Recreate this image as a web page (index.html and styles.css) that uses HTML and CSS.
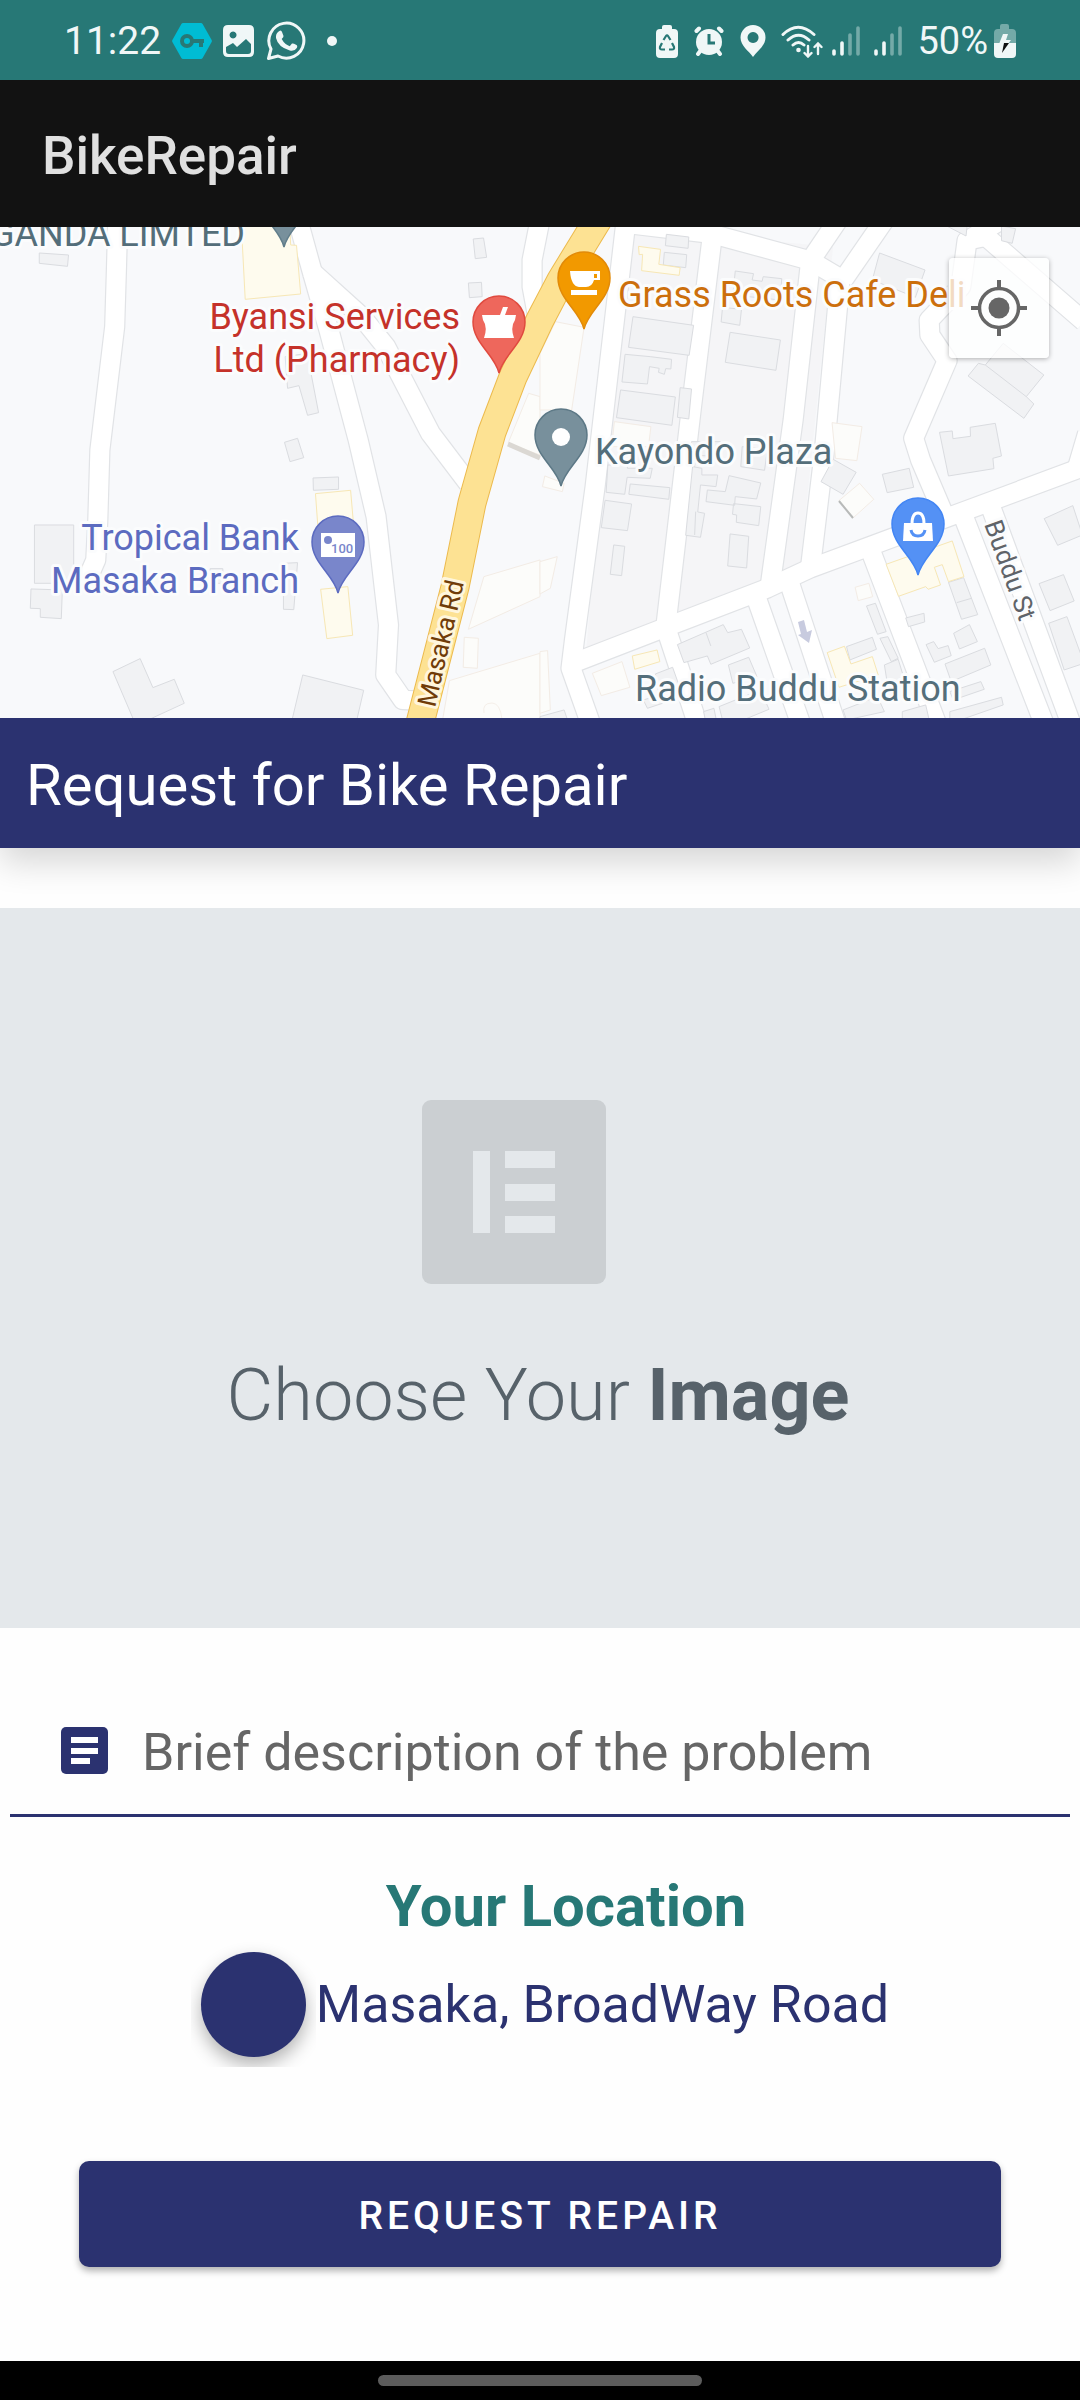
FILE: index.html
```html
<!DOCTYPE html>
<html lang="en">
<head>
<meta charset="utf-8">
<meta name="viewport" content="width=device-width, initial-scale=1">
<title>BikeRepair</title>
<link rel="stylesheet" href="styles.css">
</head>
<body>
<div class="status">
  <div class="status-side">
    <span class="status-text clock">11:22</span>
    <svg class="ic-key" width="40" height="38" viewBox="0 0 40 38"><path fill="#00bcd4" d="M11 1h18q1 0 1.600 1l9 16q.5 1 0 2l-9 16q-.6 1-1.600 1h-18q-1 0-1.600-1l-9-16q-.5-1 0-2l9-16q.6-1 1.600-1z"/><circle cx="15" cy="19" r="5" fill="none" stroke="#277876" stroke-width="4"/><path d="M20 19h12M29 19v6" fill="none" stroke="#277876" stroke-width="4"/></svg>
    <svg class="ic-image" width="31" height="32" viewBox="0 0 31 32"><path fill="#f0f7f7" fill-rule="evenodd" d="M5 0h21q5 0 5 5v22q0 5-5 5H5q-5 0-5-5V5q0-5 5-5zM3 22v4q0 3 3 3h19q3 0 3-3v-7l-5-5-9 8-4-4zM10 6.500a3.500 3.500 0 1 0 .1 0z"/></svg>
    <svg class="ic-chat" width="40" height="40" viewBox="0 0 40 40"><path d="M2.500 37.500 5 28A17.500 17.500 0 1 1 12 35z" fill="none" stroke="#f0f7f7" stroke-width="3" stroke-linejoin="round"/><path fill="#f0f7f7" d="M12 11q3-3 4 0l1.500 4q.3 1-1.800 3 3 5.500 8 7.200l2.300-2.600q1-.6 4 1.200 2 1 .8 3.200-2 3.500-7 2.500Q12 26 10 17q-.4-4 2-6z"/></svg>
    <span class="dot"></span>
  </div>
  <div class="status-side">
    <svg width="22" height="33" viewBox="0 0 22 33"><path fill="#f0f7f7" d="M6 4V2q0-2 2-2h6q2 0 2 2v2h2q4 0 4 4v21q0 4-4 4H4q-4 0-4-4V8q0-4 4-4z"/><path d="M7.500 15 10 11q1-1.500 2 0l2.500 4M16 18l2 4q.6 2.500-2 2.500h-3M9 24.500H6q-2.600 0-2-2.500l2-4" fill="none" stroke="#277876" stroke-width="2.200"/></svg>
    <svg class="ic-alarm" width="30" height="30" viewBox="0 0 30 30"><g stroke="#f0f7f7" stroke-width="4" stroke-linecap="round"><path d="M2.500 5 5 2.500M25 2.500 27.500 5M7 24l-3 4M23 24l3 4"/></g><circle cx="15" cy="16" r="13" fill="#f0f7f7"/><path d="M15 8v9h6" fill="none" stroke="#277876" stroke-width="3"/></svg>
    <svg class="ic-place" width="26" height="32" viewBox="0 0 26 32"><path fill="#f0f7f7" fill-rule="evenodd" d="M13 0a12.500 12.500 0 0 1 12.500 12.500C25.500 21 17 26 13 32 9 26 .5 21 .5 12.500A12.500 12.500 0 0 1 13 0zm0 7a5.500 5.500 0 1 0 .1 0z"/></svg>
    <svg class="ic-wifi" width="42" height="33" viewBox="0 0 42 33"><g fill="none" stroke="#f0f7f7" stroke-width="3" stroke-linecap="round"><path d="M2 9.500q15-14.500 31 0M7 15q10.500-9.500 21 0M12 20q5.500-5 11 0"/><path d="M27 21v10M23.500 28l3.500 3.500 3.500-3.500M37 29V19M33.500 22l3.500-3.500 3.500 3.500" stroke-width="2.400"/></g><circle cx="17.500" cy="25" r="2.300" fill="#f0f7f7"/></svg>
    <svg class="ic-signal" width="28" height="30" viewBox="0 0 28 30"><g stroke-width="3.600" stroke-linecap="round"><path d="M2 25v3M10 17v11" stroke="#f0f7f7"/><path d="M18 9v19M26 2v26" stroke="#74aaa8"/></g></svg>
    <svg class="ic-signal2" width="28" height="30" viewBox="0 0 28 30"><g stroke-width="3.600" stroke-linecap="round"><path d="M2 25v3M10 17v11" stroke="#f0f7f7"/><path d="M18 9v19M26 2v26" stroke="#74aaa8"/></g></svg>
    <span class="status-text percent">50%</span>
    <svg width="22" height="34" viewBox="0 0 22 34"><path fill="#74aaa8" d="M6 5V2q0-2 2-2h5q2 0 2 2v3h3q4 0 4 4v11H0V9q0-4 4-4z"/><path fill="#f0f7f7" d="M0 19h22v11q0 4-4 4H4q-4 0-4-4z"/><path fill="#f0f7f7" d="M9 10h5l-2 6h5l-3 4H5z"/><path fill="#111" d="M10 19h5L8 29z"/></svg>
  </div>
</div>

<header class="appbar"><h1 class="appbar-title">BikeRepair</h1></header>

<div class="map">
  <svg class="map-art" viewBox="0 0 1080 491" preserveAspectRatio="xMidYMid slice" role="img" aria-label="Map of Masaka">
    <defs>
      <path id="pin" d="M0 0C-4-18-26-30-26-51A26 26 0 0 1 26-51C26-30 4-18 0 0z"/>
      <g id="roads" fill="none">
        <g transform="matrix(.3444 0 0 .3333 0 -7)">
          <path d="M342 0 338 150 333 320 290 690 284 900 278 1020 240 1110"/>
          <path d="M865 0 905 150 955 330 1040 660 1092 890 1128 1215 1120 1365 1170 1440 1215 1442"/>
          <path d="M900 150 1050 290 1120 380 1250 640 1360 790"/>
          <path d="M1568 0 1545 120 1545 200 1570 340"/>
        </g>
        <g transform="matrix(.3444 0 0 .3333 540 -7)">
          <path d="M250 0 205 400 160 800 100 1260 90 1345 150 1520"/>
          <path d="M500 50 440 560 365 1222 460 1520"/>
          <path d="M240 10 500 42 785 122 880 180"/>
          <path d="M785 122 865 0M880 180 1000 0"/>
          <path d="M785 130 735 600 668 1100"/>
          <path d="M872 170 825 700 785 1045"/>
          <path d="M95 1330 365 1222 660 1105 785 1045 960 978 1215 880 1580 740"/>
          <path d="M622 1115 760 1520M720 1075 862 1520M955 978 1155 1520M1226 880 1467 1520M1305 850 1545 1520"/>
          <path d="M1340 0 1240 62 1222 200 1130 300 1132 345 1182 422 1085 655 1105 720 1175 890"/>
          <path d="M1240 62 1295 50 1580 305"/>
          <path d="M1590 640 1560 745"/>
        </g>
      </g>
    </defs>
    <rect width="1080" height="491" fill="#f8f9fb"/>
    <path fill="#f1f2f4" opacity=".5" d="M620 0 833 20 800 340 585 440z"/>
    <use href="#roads" class="road-edge"/>
    <use href="#roads" class="road-fill"/>
    <g class="building" transform="matrix(.3444 0 0 .3333 0 -7)">
      <path d="M114 99 199 105 196 139 114 130zM1374 57 1404 54 1413 112 1380 116zM1360 189 1398 187 1400 230 1363 233zM828 410 892 400 925 578 893 586 868 497 835 505zM826 667 864 655 882 713 842 725zM909 774 983 771 983 808 910 811zM100 915H214V1090H100zM90 1107 181 1110 178 1196 117 1192 117 1166 88 1165zM328 1355 407 1316 444 1403 506 1378 535 1450 430 1500H388zM879 1365 1056 1411 1036 1500H848zM823 1030 864 1028 853 1169 823 1168zM610 1046H647V1090H610z"/>
      <path class="shop" d="M700 0H840L844 75 861 76 873 222 712 238zM916 821 1018 811 1028 930 924 935zM931 1108 1010 1100 1024 1246 949 1256z"/>
      <path class="plain" d="M1535 520 1568 530V705L1475 670zM1405 1070 1568 1020V1130L1360 1228zM1348 1252 1389 1255 1386 1345 1345 1342zM1305 1382 1568 1300V1500H1285z"/>
    </g>
    <g class="building" transform="matrix(.3444 0 0 .3333 540 -7)">
      <path d="M367 43 432 51 430 85 364 77zM361 97 426 104 423 143 358 135zM567 153 620 161 616 180 645 184 648 170 702 176 697 240 560 225zM530 262 585 268 580 316 526 306zM270 290 446 316 433 406 257 382zM552 337 698 360 685 451 538 427zM247 403 320 410 382 418 380 447 365 446 361 463 344 457 346 445 318 440 312 492 238 486zM234 510 393 531 383 616 222 593zM407 503 440 507 432 597 399 592zM986 99 1118 150 1090 232 965 180zM1345 370 1463 465 1412 530 1434 552 1405 595 1243 468 1273 430 1293 435zM1160 637 1197 633 1199 656 1250 649 1249 622 1322 610 1340 708 1315 715 1318 746 1186 768zM994 763 1072 745 1085 802 1008 818zM851 718 918 757 880 823 816 785zM197 735 253 735 254 745 326 745 320 775 253 772 246 823 192 817zM262 792 377 803 374 838 258 823zM189 841 266 852 254 932 178 923zM214 975 246 979 237 1067 204 1063zM443 740 470 745 470 765 516 765 511 800 466 795 458 876 478 880 466 952 423 946zM486 810 538 815 549 767 641 789 629 837 567 830 565 856 482 845zM562 851 641 860 635 917 570 907 571 885 559 883zM552 942 606 949 600 1044 545 1038zM587 680 660 690 652 751 583 740zM440 665 524 665 520 710 440 705zM1062 1194 1115 1180 1117 1206 1070 1220zM948 1158 974 1150 1005 1235 980 1243zM987 1255 1010 1250 1040 1315 1020 1325zM1201 1240 1247 1214 1270 1265 1218 1287zM1121 1274 1143 1265 1156 1286 1185 1277 1194 1307 1145 1327zM1176 1332 1291 1285 1309 1335 1194 1385zM1186 1087 1230 1073 1271 1184 1224 1198zM1464 896 1547 857 1575 945 1503 976zM1449 1091 1520 1064 1551 1143 1481 1172zM1477 1210 1530 1190 1580 1330 1522 1350zM1340 18 1381 26 1371 70 1340 62zM1185 20 1240 20 1237 48zM399 1274 532 1214 545 1238 585 1228 609 1284 496 1333 486 1308 418 1328zM547 1335 606 1312 630 1370 560 1390zM335 1362 385 1342 405 1400 345 1420zM1000 1335 1040 1318 1060 1385 1010 1400zM1190 1415 1280 1385 1290 1408 1200 1440zM1190 1475 1340 1432 1345 1455 1220 1500H1190zM1052 1475 1120 1455 1130 1500H1052zM520 1460 640 1410 665 1468 590 1500H530zM0 1490 70 1470 80 1500H0zM890 1280 965 1252 977 1288 900 1320zM880 1470 980 1430 1000 1475 890 1500zM300 1440 350 1425 356 1450 312 1465zM475 1475 505 1465 512 1500H480z"/>
      <path d="M482 1238 496 1278M1210 1148 1253 1135M1293 435 1412 530M452 875 449 945" fill="none"/>
      <path class="shop" d="M286 79 350 88 345 133 407 143 404 166 295 152 298 103 288 104zM268 1308 340 1290 348 1325 275 1348zM1005 1033 1197 963 1231 1070 1186 1085 1168 1034 1145 1042 1163 1095 1127 1108 1120 1100 1041 1129zM834 1298 884 1279 903 1332 965 1310 982 1365 868 1402z"/>
      <path class="plain" d="M45 305 128 322 92 570 0 570V400zM216 605 322 620 315 680H208zM848 608 935 620 920 722 858 715zM868 842 928 790 969 838 910 893zM915 1102 955 1090 966 1130 924 1142zM152 1360 238 1325 261 1402 178 1427zM0 1025 50 1010 30 1105 0 1122zM0 1295 22 1292 30 1470 0 1480zM14 768 70 790 65 815 7 800z"/>
    </g>
    <path d="M839 274 853 291" stroke="#b8bab9" stroke-width="2"/>
    <path d="M508 217 540 231" stroke="#dbd8d3" stroke-width="5"/>
    <path d="M484 486q-2-10 8-10 8 0 10 16" fill="none" stroke="#f5efe9"/>
    <path class="main-edge" d="M419 500 437 430 455 360 472 276 492 205 513 150 540 93 561 53 602-14"/>
    <path class="main-fill" d="M419 500 437 430 455 360 472 276 492 205 513 150 540 93 561 53 602-14"/>
    <path fill="#c8cbdf" d="M798 395 804 393 807 405 812 403 809 416 798 408 801 407z"/>

    <g class="map-label" font-size="36">
      <g fill="#546e7a"><text x="245" y="19" text-anchor="end">GANDA LIMTED</text><text x="595" y="237">Kayondo Plaza</text><text x="635" y="474">Radio Buddu Station</text></g>
      <g fill="#c5322a" text-anchor="end"><text x="460" y="102">Byansi Services</text><text x="460" y="145">Ltd (Pharmacy)</text></g>
      <g fill="#5c6bc0" text-anchor="end"><text x="299" y="323">Tropical Bank</text><text x="299" y="366">Masaka Branch</text></g>
      <text x="618" y="80" fill="#cc6f0c">Grass Roots Cafe Deli</text>
    </g>
    <text class="map-label" font-size="26" fill="#703c08" style="stroke:#fff6dc" transform="translate(435 481) rotate(-77)">Masaka Rd</text>
    <text class="map-label" font-size="26" fill="#5f6368" transform="translate(984 297) rotate(70)">Buddu St</text>

    <g stroke-width="1.500">
      <use href="#pin" x="284" y="20" fill="#78909c" stroke="#607d8b"/>
      <g transform="translate(561 259)"><use href="#pin" fill="#78909c" stroke="#5c7886"/><circle cy="-49" r="9" fill="#fff"/></g>
      <g transform="translate(499 146)"><use href="#pin" fill="#ee675c" stroke="#e04a3f"/><path fill="#fff" d="M-17-58H1L4-66H9L6-58H17L16-53Q11-46 15-35H-15Q-11-46-16-53z"/></g>
      <g transform="translate(584 102)"><use href="#pin" fill="#f29900" stroke="#e28a08"/><path fill="#fff" fill-rule="evenodd" d="M-14-58H16V-49H10Q8-42 2-42H-5Q-13-43-14-58zM10-55V-51H13V-55zM-13-39H13V-34H-13z"/></g>
      <g transform="translate(338 366)"><use href="#pin" fill="#7986cb" stroke="#5c6bc0"/><path fill="#fff" d="M-17-60H17V-36H-17z"/><circle cx="-10" cy="-53" r="4" fill="#7986cb"/><text x="-7" y="-40" font-size="13" font-weight="500" fill="#7986cb" stroke="none">100</text></g>
      <g transform="translate(918 348)"><use href="#pin" fill="#5491f5" stroke="#4285f4"/><path fill="#fff" d="M-14-52H14L15-34H-15z"/><path d="M-6-51Q-6-62 0-62T6-51" fill="none" stroke="#fff" stroke-width="3"/><path d="M-7-45Q-6-39 0-39T7-45" fill="none" stroke="#5491f5" stroke-width="3"/></g>
    </g>
  </svg>
  <button class="locate" type="button" aria-label="Show my location">
    <svg width="56" height="56" viewBox="0 0 56 56"><circle cx="28" cy="28" r="10.500" fill="#666"/><circle cx="28" cy="28" r="19.500" fill="none" stroke="#666" stroke-width="3.500"/><path d="M28 0v9M28 47v9M0 28h9M47 28h9" stroke="#666" stroke-width="4"/></svg>
  </button>
</div>

<h2 class="banner">Request for Bike Repair</h2>

<main class="form">
  <button class="photo" type="button">
    <svg class="photo-icon" width="184" height="184" viewBox="0 0 184 184"><rect width="184" height="184" rx="9" fill="#cbcfd2"/><path fill="#e4e8eb" d="M51 51H68V133H51zM83 51H133V68H83zM83 84H133V101H83zM83 116H133V133H83z"/></svg>
    <span class="photo-text">Choose Your <b>Image</b></span>
  </button>

  <label class="field">
    <svg width="47" height="47" viewBox="0 0 47 47"><rect width="47" height="47" rx="5" fill="#2b3270"/><path fill="#fff" d="M10 10H37V16H10zM10 21H37V27H10zM10 31H29V37H10z"/></svg>
    <input class="field-input" type="text" placeholder="Brief description of the problem" aria-label="Brief description of the problem">
  </label>

  <h3 class="place-title">Your Location</h3>
  <div class="place">
    <span class="fab-wrap"><button class="fab" type="button" aria-label="Update location"></button></span>
    <span>Masaka, BroadWay Road</span>
  </div>

  <button class="submit" type="submit">REQUEST REPAIR</button>
</main>

<div class="navbar"><span class="pill"></span></div>
</body>
</html>
```
FILE: styles.css
```css
* { box-sizing: border-box; }

body {
  margin: 0;
  min-height: 100vh;
  display: flex;
  flex-direction: column;
  background: #fefefe;
  font-family: Roboto, sans-serif;
}

button {
  border: 0;
  padding: 0;
  font-family: inherit;
}

h1, h2, h3 { margin: 0; }

.status {
  height: 80px;
  padding: 2px 64px 0;
  display: flex;
  align-items: center;
  justify-content: space-between;
  background: #277876;
  color: #f0f7f7;
}

.status-side {
  display: flex;
  align-items: center;
}

.status-text {
  font-size: 38px;
  line-height: 44px;
}

.clock { font-size: 39px; }

.ic-key { margin-left: 11px; }
.ic-image { margin-left: 11px; }
.ic-chat { margin-left: 12px; }

.dot {
  width: 10px;
  height: 10px;
  margin-left: 21px;
  border-radius: 50%;
  background: #f0f7f7;
}

.ic-alarm { margin-left: 16px; }
.ic-place { margin-left: 16px; }
.ic-wifi { margin-left: 15px; }
.ic-signal { margin-left: 9px; }
.ic-signal2 { margin-left: 14px; }
.percent { margin: 0 6px 0 15px; }

.appbar {
  height: 147px;
  padding: 4px 42px 0;
  display: flex;
  align-items: center;
  background: #121212;
  color: #e0e0e0;
}

.appbar-title {
  font-size: 53px;
  line-height: 62px;
  font-weight: 500;
}

.map {
  position: relative;
  height: 491px;
  overflow: hidden;
}

.map-art {
  display: block;
  width: 100%;
  height: 100%;
}

.building path { vector-effect: non-scaling-stroke; }

.road-edge { stroke: #e1e3e6; stroke-width: 62px; stroke-linejoin: round; }
.road-fill { stroke: #fff; stroke-width: 55px; stroke-linejoin: round; }

.building path { fill: #f1f2f4; stroke: #dadce0; stroke-width: 1px; }
.building .shop { fill: #fefbee; stroke: #f7e7b5; }
.building .plain { fill: #fcfcfa; stroke: #f3ece5; }

.main-edge, .main-fill { fill: none; stroke-linejoin: round; }
.main-edge { stroke: #ecba4d; stroke-width: 29px; }
.main-fill { stroke: #fde293; stroke-width: 27px; }

.map-label {
  stroke: #fbfcfd;
  stroke-width: 6px;
  stroke-linejoin: round;
  paint-order: stroke;
}

.locate {
  position: absolute;
  top: 31px;
  right: 31px;
  width: 100px;
  height: 100px;
  display: grid;
  place-items: center;
  border-radius: 4px;
  background: rgba(255, 255, 255, .75);
  box-shadow: 0 1px 5px rgba(0, 0, 0, .3);
}

.banner {
  height: 130px;
  padding: 4px 26px 0;
  display: flex;
  align-items: center;
  background: #2b3270;
  color: #fff;
  font-size: 58px;
  line-height: 68px;
  font-weight: 400;
  box-shadow: 0 14px 32px rgba(0, 0, 0, .16);
}

.form {
  padding-top: 60px;
  display: flex;
  flex-direction: column;
}

.photo {
  aspect-ratio: 3 / 2;
  padding: 192px 4px 0 0;
  display: flex;
  flex-direction: column;
  align-items: center;
  gap: 70px;
  background: #e4e8eb;
  color: #57626a;
}

.photo-icon { margin-right: 48px; }

.photo-text {
  font-size: 72px;
  line-height: 84px;
  font-weight: 300;
}

.photo-text b { font-weight: 700; }

.field {
  margin: 62px 10px 0;
  padding: 32px 51px;
  display: flex;
  align-items: center;
  gap: 34px;
  border-bottom: 3px solid #2b3270;
}

.field svg { margin-bottom: 4px; }

.field-input {
  flex: 1;
  min-width: 0;
  height: 60px;
  padding: 0;
  border: 0;
  outline: 0;
  background: none;
  font-family: inherit;
  font-size: 52px;
  color: #222;
}

.field-input::placeholder { color: #666; opacity: 1; }

.place-title {
  margin-top: 55px;
  padding-left: 52px;
  text-align: center;
  font-size: 58px;
  line-height: 68px;
  font-weight: 700;
  color: #277876;
}

.place {
  margin-top: 2px;
  display: flex;
  align-items: center;
  justify-content: center;
  color: #2b3270;
  font-size: 52px;
  line-height: 62px;
}

.fab-wrap {
  padding: 10px;
  overflow: hidden;
}

.fab {
  display: block;
  width: 105px;
  height: 105px;
  border-radius: 50%;
  background: #2b3270;
  box-shadow: 0 8px 18px rgba(0, 0, 0, .3);
}

.submit {
  height: 106px;
  margin: 94px 79px;
  padding-top: 3px;
  border-radius: 10px;
  background: #2b3270;
  box-shadow: 0 4px 7px rgba(0, 0, 0, .3);
  color: #fff;
  font-size: 39px;
  font-weight: 500;
  letter-spacing: 4px;
}

.navbar {
  height: 39px;
  margin-top: auto;
  display: grid;
  place-items: center;
  background: #000;
}

.pill {
  width: 30%;
  height: 11px;
  border-radius: 6px;
  background: #5c5c5c;
}
```
